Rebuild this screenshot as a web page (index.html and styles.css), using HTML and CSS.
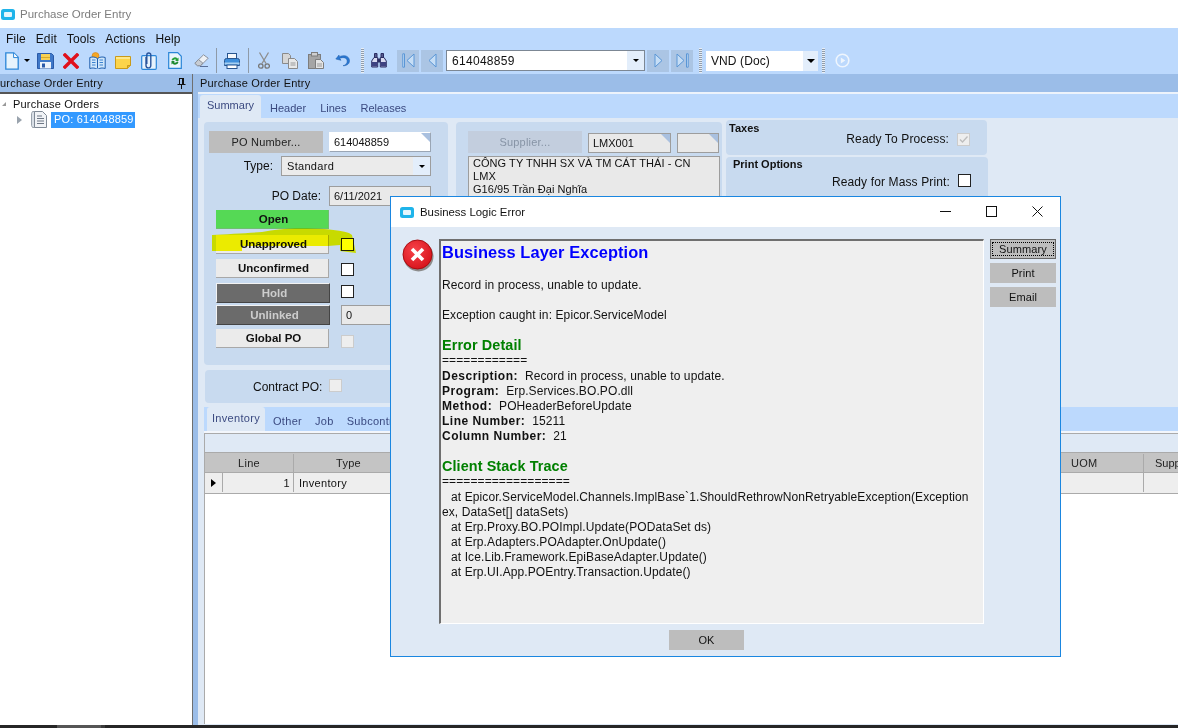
FILE: index.html
```html
<!DOCTYPE html>
<html lang="en">
<head>
    <meta charset="UTF-8">
    <meta name="viewport" content="width=device-width, initial-scale=1.0">
    <title>Purchase Order Entry</title>
    <link rel="stylesheet" href="styles.css">
</head>
<body>
    <header class="titlebar">
        <svg class="app-icon" width="14" height="11" viewBox="0 0 14 11"><rect x="0" y="0" width="14" height="11" rx="2.5" fill="#1fb4ea"/><rect x="3" y="3" width="8" height="5" rx="1" fill="#e4f6fd"/></svg>
        <span>Purchase Order Entry</span>
    </header>

    <nav class="menubar">
        <span>File</span><span>Edit</span><span>Tools</span><span>Actions</span><span>Help</span>
    </nav>

    <div class="toolbar">
        <span class="tool tool-new"><svg width="14" height="18" viewBox="0 0 14 18"><path d="M.8.8h8l4.4 4.4v12H.8z" fill="#e6f3fc" stroke="#2a86d8" stroke-width="1.3"/><path d="M8.6 1v4.6h4.4" fill="#fff" stroke="#2a86d8"/></svg></span>
        <span class="tool tool-caret"><i class="caret"></i></span>
        <span class="tool"><svg width="17" height="16" viewBox="0 0 17 16"><path d="M.5.5h14l2 2v13H.5z" fill="#3f78c8" stroke="#2b5aa8"/><rect x="4" y="1" width="9" height="6" fill="#f7d154"/><rect x="4" y="4" width="9" height="1" fill="#d9a928"/><rect x="3" y="9" width="11" height="6.5" fill="#eef3fa"/><rect x="5" y="10.500" width="3" height="4" fill="#2b5aa8"/></svg></span>
        <span class="tool"><svg width="16" height="16" viewBox="0 0 16 16"><path d="M2 2l12 12M14 2L2 14" stroke="#e0101c" stroke-width="3.400" stroke-linecap="square"/></svg></span>
        <span class="tool"><svg width="17" height="17" viewBox="0 0 17 17"><circle cx="6.500" cy="4" r="3.500" fill="#f5a623" stroke="#d9820f" stroke-width=".6"/><path d="M.8 5.500c3-1 5.500-.5 7.700 1 2.200-1.500 4.700-2 7.700-1v11c-3-1-5.500-.5-7.700 1-2.200-1.500-4.700-2-7.700-1z" fill="#cfe6fa" stroke="#1f5fae"/><path d="M8.500 6.500v10" stroke="#1f5fae"/><path d="M3 8h3.500M3 10.500h3.500M3 13h3.500M10.500 8H14M10.500 10.500H14M10.500 13H14" stroke="#3c82cf"/></svg></span>
        <span class="tool tool-note"><svg width="16" height="13" viewBox="0 0 16 13"><path d="M.5.500h15v9l-3 3H.5z" fill="#fcd44a" stroke="#c99a1a"/><path d="M12.500 12.500v-3h3" fill="#e5b52c" stroke="#c99a1a"/><rect x="1" y="1" width="14" height="2" fill="#fde88d"/></svg></span>
        <span class="tool"><svg width="16" height="18" viewBox="0 0 16 18"><rect x=".7" y="3.700" width="14.600" height="13.600" rx="1" fill="#e7f3fc" stroke="#2a86d8" stroke-width="1.200"/><path d="M5 5v8.500a2.400 2.400 0 0 0 4.800 0V3a2 2 0 0 0-4 0v9" fill="none" stroke="#27539b" stroke-width="1.400"/></svg></span>
        <span class="tool"><svg width="14" height="17" viewBox="0 0 14 17"><path d="M.7.700h9l3.600 3.600v12H.7z" fill="#eaf5fc" stroke="#2a86d8" stroke-width="1.200"/><path d="M3.500 8a3.500 3.500 0 0 1 6-1.500l1-1v3.500H7l1.200-1.100A2 2 0 0 0 5 8.500z" fill="#27a03a"/><path d="M10.500 10a3.500 3.500 0 0 1-6 1.500l-1 1V9H7l-1.200 1.100A2 2 0 0 0 9 9.500z" fill="#1d8a2f"/></svg></span>
        <span class="tool"><svg width="15" height="13" viewBox="0 0 15 13"><path d="M9.500.8l4.700 3.400-7.500 7.500H3.500L.9 9.300z" fill="#eef1f5" stroke="#8a919c"/><path d="M.9 9.300l3.500-3.800 4.400 3.500-2.100 2.700H3.500z" fill="#c7ccd3" stroke="#8a919c"/><path d="M6 12.500h8" stroke="#5a6f99"/></svg></span>
        <span class="tool-sep"></span>
        <span class="tool tool-print"><svg width="16" height="16" viewBox="0 0 16 16"><rect x="3.500" y=".5" width="9" height="6" fill="#f5f8fc" stroke="#28558f"/><path d="M.5 7.500q0-2 2-2h11q2 0 2 2v5h-15z" fill="#3f8fdc" stroke="#28558f"/><rect x=".5" y="9.500" width="15" height="2" fill="#a7d0f2"/><rect x="3" y="12" width="10" height="3.500" fill="#fff" stroke="#28558f"/></svg></span>
        <span class="tool-sep tool-sep-b"></span>
        <span class="tool tool-scissors"><svg width="12" height="17" viewBox="0 0 12 17"><path d="M1.500.5l6.500 11M10.500.5L4 11.500" stroke="#8d8d8d" stroke-width="1.300"/><circle cx="2.800" cy="14" r="2.200" fill="none" stroke="#777" stroke-width="1.300"/><circle cx="9.200" cy="14" r="2.200" fill="none" stroke="#777" stroke-width="1.300"/></svg></span>
        <span class="tool"><svg width="16" height="16" viewBox="0 0 16 16"><path d="M.5.500h6l2 2v8H.5z" fill="#d6d6d6" stroke="#8a8a8a"/><path d="M6.500 5.500h6l3 3v7h-9z" fill="#e8e8e8" stroke="#8a8a8a"/><path d="M8.500 10h5M8.500 12h5" stroke="#9a9a9a"/></svg></span>
        <span class="tool"><svg width="16" height="17" viewBox="0 0 16 17"><rect x=".5" y="2.500" width="12" height="14" fill="#a5a5a5" stroke="#7d7d7d"/><rect x="3.500" y=".5" width="6" height="3.500" fill="#cfcfcf" stroke="#7d7d7d"/><path d="M7.500 7.500h5l3 3v6h-8z" fill="#e4e4e4" stroke="#7d7d7d"/><path d="M9 12h5M9 14h5" stroke="#999"/></svg></span>
        <span class="tool"><svg width="15" height="13" viewBox="0 0 15 13"><path d="M4 1L.8 5 6 6.300l-1.300-2C8 3 12 3.500 12.200 7c.1 2.500-2 4.300-4.200 4.700 3.800.4 6.700-2 6.500-5.200C14.200 1.800 9 .5 4.300 2.700z" fill="#2a78d2" stroke="#1e5cab" stroke-width=".5"/></svg></span>
        <span class="tool-grip"></span>
        <span class="tool tool-find"><svg width="16" height="15" viewBox="0 0 16 15"><path d="M3.500.5h2.500v4H3.500zM10 .5h2.500v4H10z" fill="#565b8e" stroke="#2a2d63"/><path d="M3 4.500h3.700v9.500H.7V8zM9.300 4.500H13L15.300 8v6h-6z" fill="#d8daf0" stroke="#2a2d63"/><rect x="1" y="9" width="5.500" height="4.500" fill="#3e4282"/><rect x="9.500" y="9" width="5.500" height="4.500" fill="#3e4282"/><rect x="6.500" y="5.500" width="3" height="4" fill="#2a2d63"/></svg></span>
        <span class="nav-btn nav-first"><svg width="13" height="15" viewBox="0 0 13 15"><path d="M.8.800h1.700v13.400H.8zM12 1v13L5 7.500z" fill="#c6def6" stroke="#5a96d6"/></svg></span>
        <span class="nav-btn nav-prev"><svg width="9" height="15" viewBox="0 0 9 15"><path d="M8 1v13L1 7.500z" fill="#c6def6" stroke="#5a96d6"/></svg></span>
        <div class="combo record-combo"><span>614048859</span><b class="combo-btn"><i class="caret"></i></b></div>
        <span class="nav-btn nav-next"><svg width="9" height="15" viewBox="0 0 9 15"><path d="M1 1v13l7-6.500z" fill="#c6def6" stroke="#5a96d6"/></svg></span>
        <span class="nav-btn nav-last"><svg width="13" height="15" viewBox="0 0 13 15"><path d="M1 1v13l7-6.500zM10.500.8h1.700v13.400h-1.700z" fill="#c6def6" stroke="#5a96d6"/></svg></span>
        <span class="tool-grip grip-b"></span>
        <div class="combo currency-combo"><span>VND (Doc)</span><b class="combo-btn"><i class="caret"></i></b></div>
        <span class="tool-grip grip-c"></span>
        <span class="tool tool-play"><svg width="15" height="15" viewBox="0 0 15 15"><circle cx="7.500" cy="7.500" r="6.300" fill="none" stroke="#eef5fd" stroke-width="1.600"/><path d="M5.800 4.500v6l4.500-3z" fill="#eef5fd"/></svg></span>
    </div>

    <div class="workspace">
        <aside class="tree-pane">
            <div class="pane-title tree-title">
                <span>urchase Order Entry</span>
                <svg width="9" height="11" viewBox="0 0 9 11"><path d="M2 .5h5M2.500.5v5.500M6.500.5v5.500M.5 6.500h8M4.500 6.500V11" stroke="#111" fill="none"/><rect x="5" y="1" width="1.500" height="5" fill="#111"/></svg>
            </div>
            <div class="tree">
                <div class="tree-root"><i class="tree-open"></i>Purchase Orders</div>
                <div class="tree-item">
                    <i class="tree-closed"></i>
                    <svg width="16" height="17" viewBox="0 0 16 17"><path d="M3.500.5h-2l-1 2v12l1 2h2z" fill="#d9dfe6" stroke="#9aa3ad"/><path d="M3.500.5h8l4 4v12h-12z" fill="#f1f3f6" stroke="#7f8995"/><path d="M6 5h5M6 7.500h7M6 10h7M6 12.500h7" stroke="#6d7785"/></svg>
                    <span class="tree-selected">PO: 614048859</span>
                </div>
            </div>
        </aside>
        <div class="splitter"></div>
        <main class="content">
            <div class="pane-title">Purchase Order Entry</div>
            <div class="tabs main-tabs">
                <span class="tab active">Summary</span><span class="tab">Header</span><span class="tab">Lines</span><span class="tab">Releases</span>
            </div>
            <section class="summary">
                <div class="col-po">
                    <div class="panel po-panel">
                        <div class="row row-number">
                            <span class="btn-gray">PO Number...</span>
                            <span class="field field-white field-po">614048859</span>
                        </div>
                        <div class="row row-type">
                            <label class="lbl lbl-type">Type:</label>
                            <div class="select"><span>Standard</span><b class="combo-btn"><i class="caret"></i></b></div>
                        </div>
                        <div class="row row-date">
                            <label class="lbl lbl-date">PO Date:</label>
                            <span class="field field-po field-date">6/11/2021</span>
                        </div>
                        <div class="row row-open"><span class="status status-open">Open</span></div>
                        <div class="row row-approved"><span class="status">Unapproved</span><i class="check"></i></div>
                        <div class="row row-confirmed"><span class="status">Unconfirmed</span><i class="check"></i></div>
                        <div class="row row-hold"><span class="status status-dark">Hold</span><i class="check"></i></div>
                        <div class="row row-linked"><span class="status status-dark">Unlinked</span><span class="field field-count">0</span></div>
                        <div class="row row-global"><span class="status">Global PO</span><i class="check check-off"></i></div>
                    </div>
                    <div class="panel contract-panel">
                        <label class="lbl">Contract PO:</label><i class="check check-off"></i>
                    </div>
                </div>
                <div class="panel supplier-panel">
                    <div class="row">
                        <span class="btn-gray btn-off">Supplier...</span>
                        <span class="field field-po field-supplier">LMX001</span>
                        <span class="field field-po field-extra"></span>
                    </div>
                    <div class="address">CÔNG TY TNHH SX VÀ TM CÁT THÁI - CN<br>LMX<br>G16/95 Trần Đại Nghĩa</div>
                </div>
                <div class="col-options">
                    <div class="panel taxes-panel">
                        <h4>Taxes</h4>
                        <div class="option"><label class="lbl">Ready To Process:</label>
                            <i class="check check-off"><svg width="11" height="11" viewBox="0 0 11 11"><path d="M2 5.500l2.500 2.500L9.500 2.500" fill="none" stroke="#bdbdbd" stroke-width="1.300"/></svg></i>
                        </div>
                    </div>
                    <div class="panel print-panel">
                        <h4>Print Options</h4>
                        <div class="option"><label class="lbl">Ready for Mass Print:</label><i class="check"></i></div>
                    </div>
                </div>
            </section>
            <div class="tabs sub-tabs">
                <span class="tab active">Inventory</span><span class="tab">Other</span><span class="tab">Job</span><span class="tab">Subcontr</span>
            </div>
            <section class="grid-area">
                <div class="grid-strip"></div>
                <div class="grid-row grid-head">
                    <span class="cell cell-line">Line</span>
                    <span class="cell cell-type">Type</span>
                    <span class="cell cell-fill"></span>
                    <span class="cell cell-uom">UOM</span>
                    <span class="cell cell-supp">Supp</span>
                </div>
                <div class="grid-row grid-body">
                    <span class="cell cell-marker"><i class="marker"></i></span>
                    <span class="cell cell-num">1</span>
                    <span class="cell cell-type cell-left">Inventory</span>
                    <span class="cell cell-fill"></span>
                    <span class="cell cell-uom"></span>
                    <span class="cell cell-supp"></span>
                </div>
            </section>
        </main>
    </div>

    <div class="statusbar"><span class="thumb"></span><span class="thumb-end"></span></div>

    <!-- marker pen stroke drawn over the Unapproved row -->
    <svg class="highlight" width="150" height="30" viewBox="0 0 150 30"><path d="M0 7C15 6 35 5 50 4C62 2 72 .5 83 .3C100 0 125 1 137 5L140 7L144 25L128 23L128 17L116 18L30 18L30 23L0 23Z" fill="#ffff00"/></svg>

    <div class="dialog">
        <div class="dialog-title">
            <svg class="app-icon" width="14" height="11" viewBox="0 0 14 11"><rect x="0" y="0" width="14" height="11" rx="2.500" fill="#1fb4ea"/><rect x="3" y="3" width="8" height="5" rx="1" fill="#e4f6fd"/></svg>
            <span class="dialog-name">Business Logic Error</span>
            <span class="win-btn"><svg width="11" height="11" viewBox="0 0 11 11"><path d="M0 5.500h11" stroke="#111"/></svg></span>
            <span class="win-btn"><svg width="11" height="11" viewBox="0 0 11 11"><rect x=".5" y=".5" width="10" height="10" fill="none" stroke="#111"/></svg></span>
            <span class="win-btn"><svg width="11" height="11" viewBox="0 0 11 11"><path d="M.5.500l10 10M10.500.500l-10 10" stroke="#111"/></svg></span>
        </div>
        <div class="dialog-body">
            <svg class="error-icon" width="33" height="33" viewBox="0 0 33 33">
                <defs><radialGradient id="errorFill" cx=".4" cy=".35" r=".75"><stop offset="0" stop-color="#f7434a"/><stop offset="1" stop-color="#d40f17"/></radialGradient></defs>
                <circle cx="16.500" cy="17.500" r="15" fill="#8c8c8c"/>
                <circle cx="15.500" cy="15.500" r="14.500" fill="url(#errorFill)" stroke="#a80d12"/>
                <path d="M10 10l11 11M21 10L10 21" stroke="#fff" stroke-width="3.600"/>
            </svg>
            <div class="error-text">
                <h2>Business Layer Exception</h2>
                <p class="msg">Record in process, unable to update.</p>
                <p class="msg">Exception caught in: Epicor.ServiceModel</p>
                <h3>Error Detail</h3>
                <p>============</p>
                <p class="block-start"><b>Description:</b>&nbsp; Record in process, unable to update.</p>
                <p><b>Program:</b>&nbsp; Erp.Services.BO.PO.dll</p>
                <p><b>Method:</b>&nbsp; POHeaderBeforeUpdate</p>
                <p><b>Line Number:</b>&nbsp; 15211</p>
                <p><b>Column Number:</b>&nbsp; 21</p>
                <h3>Client Stack Trace</h3>
                <p>==================</p>
                <p class="stack block-start">at Epicor.ServiceModel.Channels.ImplBase`1.ShouldRethrowNonRetryableException(Exception<br>ex, DataSet[] dataSets)</p>
                <p class="stack">at Erp.Proxy.BO.POImpl.Update(PODataSet ds)</p>
                <p class="stack">at Erp.Adapters.POAdapter.OnUpdate()</p>
                <p class="stack">at Ice.Lib.Framework.EpiBaseAdapter.Update()</p>
                <p class="stack">at Erp.UI.App.POEntry.Transaction.Update()</p>
            </div>
            <div class="side-btns">
                <span class="dlg-btn dlg-focus"><span>Summary</span></span>
                <span class="dlg-btn">Print</span>
                <span class="dlg-btn">Email</span>
            </div>
        </div>
        <div class="dialog-foot"><span class="dlg-btn dlg-ok">OK</span></div>
    </div>
</body>
</html>
```

FILE: styles.css
```css
* {
    box-sizing: border-box;
}
body {
    position: relative;
    display: flex;
    flex-direction: column;
    width: 1178px;
    height: 728px;
    margin: 0;
    overflow: hidden;
    background: #fff;
    font-family: "Liberation Sans", Arial, sans-serif;
    font-size: 11px;
    color: #111;
}
i, b {
    font-style: normal;
    font-weight: normal;
}

/* window chrome */
.titlebar {
    display: flex;
    align-items: center;
    flex: 0 0 28px;
    padding-left: 1px;
    font-size: 11.5px;
    color: #7d7d7d;
}
.titlebar .app-icon {
    margin: 0 5px 0 0;
}
.menubar {
    display: flex;
    flex: 0 0 19px;
    align-items: center;
    gap: 10px;
    padding: 3px 0 0 6px;
    background: #bcd9fd;
    font-size: 12px;
    letter-spacing: .1px;
}

/* toolbar */
.toolbar {
    display: flex;
    align-items: center;
    flex: 0 0 27px;
    background: #bcd9fd;
}
.tool {
    display: flex;
    flex: 0 0 26px;
    align-items: center;
    justify-content: center;
    height: 22px;
}
.tool-new {
    flex-basis: 23px;
}
.tool-caret {
    flex-basis: 8px;
    margin-right: 1px;
}
.tool-note {
    padding-top: 4px;
}
.tool-sep {
    flex: 0 0 1px;
    height: 25px;
    margin-left: 2px;
    background: #8e9aa8;
}
.tool-sep-b {
    margin-left: 3px;
}
.tool-print {
    margin-left: 2px;
}
.tool-scissors {
    margin-left: 2px;
}
.tool-grip {
    flex: 0 0 3px;
    height: 25px;
    margin-left: 6px;
    background: repeating-linear-gradient(to bottom, #e8eef6 0, #e8eef6 1px, #8f9dad 1px, #8f9dad 2px);
}
.grip-b {
    margin-left: 6px;
}
.grip-c {
    margin-left: 4px;
}
.tool-find {
    margin-left: 2px;
}
.tool-play {
    margin-left: 4px;
}
.nav-btn {
    display: flex;
    flex: 0 0 22px;
    align-items: center;
    justify-content: center;
    height: 22px;
    margin-left: 2px;
    background: #abc5e4;
}
.nav-first {
    margin-left: 5px;
}
.caret {
    display: block;
    width: 0;
    height: 0;
    border: 3px solid transparent;
    border-top: 3px solid #000;
    border-bottom: 0;
}
.combo {
    display: flex;
    align-items: center;
    height: 21px;
    background: #fff;
    font-size: 12px;
    letter-spacing: .3px;
}
.combo span {
    flex: 1;
}
.record-combo {
    flex: 0 0 199px;
    margin-left: 3px;
    padding-left: 5px;
    border: 1px solid #7c8794;
}
.currency-combo {
    flex: 0 0 112px;
    height: 20px;
    margin-left: 4px;
    padding-left: 5px;
    letter-spacing: .1px;
}
.combo-btn {
    display: flex;
    flex: 0 0 17px;
    align-items: center;
    justify-content: center;
    align-self: stretch;
    background: #e3eefb;
}
.currency-combo .combo-btn {
    flex-basis: 15px;
}
.currency-combo .caret {
    border-width: 4px 4px 0;
}

/* main area */
.workspace {
    display: flex;
    flex: 1;
    min-height: 0;
}
.pane-title {
    display: flex;
    align-items: center;
    height: 18px;
    padding-left: 2px;
    background: #9bbde8;
    font-size: 11px;
    letter-spacing: .2px;
}
.tree-pane {
    flex: 0 0 193px;
    border-right: 1px solid #6f6f6f;
}
.tree-title {
    justify-content: space-between;
    padding: 0 6px 0 0;
}
.tree {
    height: 633px;
    padding-top: 2px;
    border-top: 2px solid #555;
    background: #fff;
    letter-spacing: .2px;
}
.tree-root {
    display: flex;
    align-items: center;
    height: 15px;
    padding-left: 2px;
}
.tree-open {
    width: 0;
    height: 0;
    margin-right: 7px;
    border-left: 4px solid transparent;
    border-bottom: 4px solid #999;
}
.tree-item {
    display: flex;
    align-items: center;
    gap: 4px;
    height: 17px;
    padding-left: 17px;
}
.tree-closed {
    width: 0;
    height: 0;
    margin-right: 5px;
    border: 4px solid transparent;
    border-left: 5px solid #9aa3ad;
    border-right: 0;
}
.tree-selected {
    width: 84px;
    height: 16px;
    padding: 1px 3px;
    background: #3399ff;
    color: #fff;
    white-space: nowrap;
}
.splitter {
    flex: 0 0 5px;
    background: #9bbde8;
}
.content {
    flex: 1;
    min-width: 0;
    background: #dfe9f5;
}
.content > .pane-title {
    height: 20px;
    border-bottom: 2px solid #edf3fb;
}
.tabs {
    display: flex;
    align-items: flex-end;
    background: #bcd9fd;
    color: #3b4a80;
}
.main-tabs {
    height: 24px;
    padding-left: 2px;
}
.tab {
    height: 20px;
    padding: 4px 7px 0;
}
.tab.active {
    height: 23px;
    background: #dfe9f5;
    border-radius: 3px 3px 0 0;
}
.main-tabs .tab.active {
    margin-right: 2px;
}
.summary {
    display: flex;
    align-items: flex-start;
    height: 289px;
    padding: 4px 0 0 6px;
}
.panel {
    background: #c8daef;
    border-radius: 4px;
}
.col-po {
    flex: 0 0 244px;
}
.po-panel {
    height: 243px;
    padding-top: 9px;
}
.row {
    display: flex;
    align-items: center;
}
.lbl {
    text-align: right;
    font-size: 12px;
}
.btn-gray {
    display: flex;
    align-items: center;
    justify-content: center;
    width: 114px;
    height: 22px;
    margin-left: 5px;
    background: #bdbdbd;
    font-size: 11px;
    letter-spacing: .2px;
    color: #222;
}
.btn-off {
    background: #c3cede;
    color: #8794a6;
    margin-left: 12px;
}
.field {
    position: relative;
    display: flex;
    align-items: center;
    height: 20px;
    padding-left: 4px;
    background: #e9e9e9;
    border: 1px solid #9d9d9d;
    font-size: 11px;
}
.field-white {
    background: #fff;
    border-color: #fff #9aa6b5 #9aa6b5 #fff;
}
.field-po {
    width: 102px;
    margin-left: 6px;
}
.field-po:not(.field-date)::after {
    content: "";
    position: absolute;
    top: 0;
    right: 0;
    border-style: solid;
    border-width: 0 9px 9px 0;
    border-color: transparent #a9c0df transparent transparent;
}
.field-supplier {
    width: 83px;
}
.field-extra {
    width: 42px;
}
.row-type {
    margin-top: 3px;
}
.lbl-type {
    width: 69px;
}
.select {
    display: flex;
    align-items: center;
    width: 150px;
    height: 20px;
    margin-left: 8px;
    padding-left: 5px;
    background: #ebebeb;
    border: 1px solid #9d9d9d;
    letter-spacing: .3px;
}
.select span {
    flex: 1;
}
.row-date {
    margin-top: 10px;
}
.lbl-date {
    width: 117px;
}
.field-date {
    margin-left: 8px;
}
.status {
    display: flex;
    align-items: center;
    justify-content: center;
    width: 113px;
    height: 19px;
    margin-left: 12px;
    padding-left: 3px;
    background: #ebebeb;
    border-right: 1px solid #a8a8a8;
    border-bottom: 1px solid #a8a8a8;
    font-weight: bold;
    font-size: 11.5px;
}
.status-open {
    background: #55d955;
    border-color: #6fbf6f;
}
.status-dark {
    height: 20px;
    width: 114px;
    background: #6b6b6b;
    border: 1px solid;
    border-color: #f2f2f2 #444 #444 #f2f2f2;
    color: #cdcdcd;
}
.row-open {
    margin-top: 4px;
}
.row-approved {
    margin-top: 6px;
}
.row-confirmed {
    margin-top: 5px;
}
.row-hold {
    margin-top: 5px;
}
.row-linked {
    margin-top: 2px;
}
.row-global {
    margin-top: 4px;
}
.row-confirmed .check {
    margin-top: 2px;
}
.row-hold .check {
    margin-top: -3px;
    margin-left: 11px;
}
.row-global .check {
    margin-top: 6px;
}
.check {
    display: flex;
    align-items: center;
    justify-content: center;
    flex: 0 0 13px;
    width: 13px;
    height: 13px;
    margin-left: 12px;
    background: #fff;
    border: 1px solid #222;
}
.check-off {
    background: #eee;
    border-color: #ccc;
}
.field-count {
    width: 100px;
    margin-left: 11px;
}
.contract-panel {
    display: flex;
    align-items: center;
    height: 33px;
    margin: 5px 0 0 1px;
    padding-left: 48px;
}
.contract-panel .check {
    margin: -2px 0 0 7px;
}
.supplier-panel {
    flex: 0 0 266px;
    height: 278px;
    margin-left: 8px;
    padding-top: 9px;
}
.supplier-panel .field {
    margin-top: 1px;
}
.address {
    width: 252px;
    height: 60px;
    margin: 3px 0 0 12px;
    padding: 0 4px;
    overflow: hidden;
    background: #e9e9e9;
    border: 1px solid #9d9d9d;
    line-height: 13px;
    letter-spacing: .05px;
}
.col-options {
    flex: 0 0 262px;
    margin: -2px 0 0 4px;
}
.taxes-panel {
    height: 35px;
    margin-right: 1px;
    padding: 2px 0 0 3px;
}
.print-panel {
    height: 90px;
    margin-top: 2px;
    padding: 1px 0 0 7px;
}
h4 {
    margin: 0;
    font-size: 11px;
    line-height: 12px;
}
.option {
    display: flex;
    align-items: center;
    justify-content: flex-end;
    padding-right: 17px;
    letter-spacing: .13px;
}
.taxes-panel .option {
    margin-top: -2px;
}
.print-panel .option {
    margin-top: 5px;
}
.option .check {
    margin-left: 8px;
}
.print-panel .check {
    margin-top: -4px;
}
.sub-tabs {
    height: 26px;
    margin-left: 6px;
    padding-left: 3px;
    border-bottom: 2px solid #f3f6fb;
    letter-spacing: .3px;
}
.sub-tabs .tab {
    padding: 4px 7px 0 6px;
}
.sub-tabs .tab.active {
    height: 24px;
    width: 58px;
    margin-right: 2px;
    padding: 5px 0 0 5px;
}
.grid-area {
    height: 291px;
    margin-left: 6px;
    background: #fff;
    border-left: 1px solid #aaa;
    overflow: hidden;
}
.grid-strip {
    height: 20px;
    background: #dfe9f5;
    border-top: 1px solid #aaa;
    border-bottom: 1px solid #aaa;
}
.grid-row {
    display: flex;
    height: 20px;
    border-bottom: 1px solid #aaa;
    white-space: nowrap;
}
.grid-head {
    padding-top: 1px;
    background: #c4c4c4;
    color: #222;
}
.grid-body {
    height: 21px;
    padding-bottom: 1px;
    background: #eee;
}
.cell {
    display: flex;
    align-items: center;
    overflow: hidden;
    border-right: 1px solid #aaa;
    letter-spacing: .3px;
}
.cell-line {
    flex: 0 0 89px;
    justify-content: center;
}
.cell-type {
    flex: 0 0 110px;
    justify-content: center;
}
.cell-left {
    justify-content: flex-start;
    padding-left: 5px;
}
.cell-fill {
    flex: 1;
}
.cell-uom {
    flex: 0 0 85px;
    padding-left: 12px;
}
.cell-supp {
    flex: 0 0 34px;
    padding-left: 11px;
    border-right: 0;
    letter-spacing: 0;
}
.cell-marker {
    flex: 0 0 18px;
    justify-content: center;
}
.cell-num {
    flex: 0 0 71px;
    justify-content: flex-end;
    padding-right: 3px;
}
.marker {
    width: 0;
    height: 0;
    border: 4px solid transparent;
    border-left: 5px solid #000;
    border-right: 0;
}
.statusbar {
    display: flex;
    flex: 0 0 3px;
    padding-left: 57px;
    background: #262626;
}
.thumb {
    width: 44px;
    background: #555;
}
.thumb-end {
    width: 4px;
    background: #3a3a3a;
}
.highlight {
    position: absolute;
    left: 212px;
    top: 228px;
    mix-blend-mode: multiply;
}

/* error dialog */
.dialog {
    position: absolute;
    left: 390px;
    top: 196px;
    width: 671px;
    height: 461px;
    background: #dfe9f5;
    border: 1px solid #1a86e0;
}
.dialog-title {
    display: flex;
    align-items: center;
    height: 30px;
    padding-left: 9px;
    background: #fff;
    font-size: 11.4px;
}
.dialog-name {
    flex: 1;
    margin-left: 6px;
}
.win-btn {
    display: flex;
    flex: 0 0 46px;
    justify-content: center;
    margin-top: -2px;
    line-height: 0;
}
.dialog-body {
    display: flex;
    align-items: flex-start;
    padding: 12px 0 0 11px;
}
.error-icon {
    flex: 0 0 33px;
}
.error-text {
    flex: 0 0 545px;
    height: 385px;
    margin-left: 4px;
    padding: 1px 0 0 1px;
    overflow: hidden;
    background: #efefef;
    border: solid;
    border-width: 2px 1px 1px 2px;
    border-color: #6f6f6f #fff #fff #6f6f6f;
    font-size: 12px;
    line-height: 15px;
    letter-spacing: .1px;
    white-space: nowrap;
}
.error-text p {
    margin: 0;
}
.error-text b {
    font-weight: bold;
    letter-spacing: .5px;
}
.error-text h2 {
    margin: 0;
    font-size: 16.4px;
    line-height: 20px;
    color: #0000ff;
}
.error-text h3 {
    margin: 14px 0 0;
    font-size: 14.4px;
    line-height: 16px;
    color: #008000;
}
.error-text .msg {
    margin-top: 15px;
}
.error-text h2 + .msg {
    margin-top: 16px;
}
.error-text .block-start {
    margin-top: 1px;
}
.error-text .stack {
    text-indent: 9px;
}
.side-btns {
    display: flex;
    flex-direction: column;
    gap: 4px;
    margin-left: 6px;
}
.dlg-btn {
    display: flex;
    align-items: center;
    justify-content: center;
    width: 66px;
    height: 20px;
    background: #bdbdbd;
    font-size: 11px;
    letter-spacing: .1px;
}
.dlg-focus {
    padding: 1px;
    border: 1px solid #666;
}
.dlg-focus span {
    flex: 1;
    text-align: center;
    border: 1px dotted #000;
}
.dialog-foot {
    padding: 6px 0 0 278px;
}
.dlg-ok {
    width: 75px;
}
```
